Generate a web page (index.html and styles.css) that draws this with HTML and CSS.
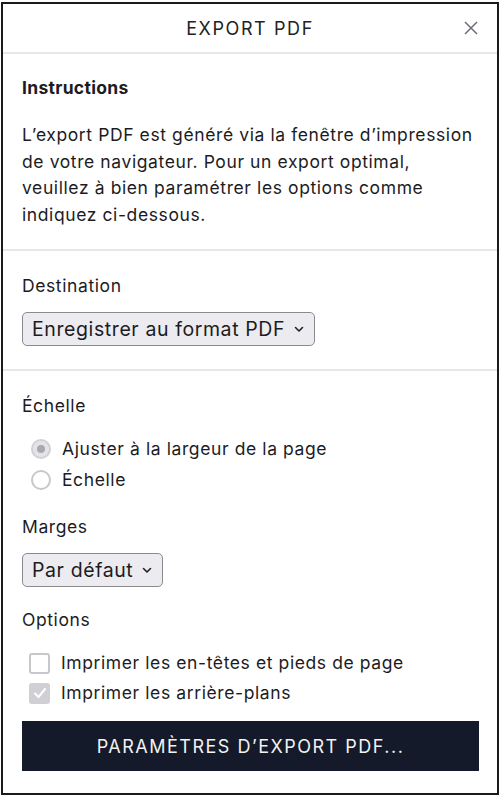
FILE: index.html
```html
<!DOCTYPE html>
<html lang="fr">
<head>
<meta charset="utf-8">
<link rel="stylesheet" href="styles.css">
</head>
<body>
<div class="modal">
  <header class="head">
    <h1 class="title">EXPORT PDF</h1>
    <button class="close" aria-label="Fermer">
      <svg width="14" height="14" viewBox="0 0 14 14"><path d="M1 1L13 13M13 1L1 13" stroke="#6b6e78" stroke-width="1.5" fill="none"/></svg>
    </button>
  </header>
  <section class="sec sec-intro">
    <h2 class="strong">Instructions</h2>
    <p class="para">L’export PDF est généré via la fenêtre d’impression de votre navigateur. Pour un export optimal, veuillez à bien paramétrer les options comme indiquez ci-dessous.</p>
  </section>
  <section class="sec sec-dest">
    <div class="label">Destination</div>
    <div class="select">Enregistrer au format PDF <span class="chev"><svg width="10" height="7" viewBox="0 0 10 7"><path d="M1.5 1.5L5 5L8.5 1.5" stroke="#222" stroke-width="1.6" fill="none" stroke-linecap="round" stroke-linejoin="round"/></svg></span></div>
  </section>
  <section class="sec sec-opts">
    <div class="label">Échelle</div>
    <div class="choices">
      <div class="choice"><span class="radio on"></span>Ajuster à la largeur de la page</div>
      <div class="choice"><span class="radio"></span>Échelle</div>
    </div>
    <div class="label label-m">Marges</div>
    <div class="select">Par défaut <span class="chev"><svg width="10" height="7" viewBox="0 0 10 7"><path d="M1.5 1.5L5 5L8.5 1.5" stroke="#222" stroke-width="1.6" fill="none" stroke-linecap="round" stroke-linejoin="round"/></svg></span></div>
    <div class="label label-o">Options</div>
    <div class="choices choices-c">
      <div class="choice"><span class="check"></span>Imprimer les en-têtes et pieds de page</div>
      <div class="choice"><span class="check on"><svg width="14" height="12" viewBox="0 0 14 12"><path d="M2 6.5L5.5 10L12 2" stroke="#fff" stroke-width="2" fill="none" stroke-linecap="round" stroke-linejoin="round"/></svg></span>Imprimer les arrière-plans</div>
    </div>
    <button class="btn">PARAMÈTRES D’EXPORT PDF...</button>
  </section>
</div>
</body>
</html>
```
FILE: styles.css
```css
* { box-sizing: border-box; }
html, body { margin: 0; padding: 0; background: #fff; }
body {
  font-family: Inter, "Noto Sans", sans-serif;
  color: #1c1c1f;
  width: 500px;
  height: 796px;
  padding: 2px 1px 1px 1px;
  letter-spacing: 0.6px;
}
.modal {
  border: 2px solid #1a1a1a;
  height: 793px;
  background: #fff;
  display: flex;
  flex-direction: column;
}
.head {
  height: 50px;
  border-bottom: 2px solid #e6e6eb;
  display: flex;
  align-items: center;
  justify-content: center;
  position: relative;
}
.title {
  margin: 0;
  font-weight: 400;
  font-size: 18px;
  letter-spacing: 1.6px;
  color: #222;
}
.close {
  position: absolute;
  right: 19px;
  top: 17px;
  border: 0;
  background: none;
  padding: 0;
  width: 14px;
  height: 14px;
  display: flex;
}
.sec {
  padding: 0 19px;
}
.sec-intro {
  padding-top: 22px;
  padding-bottom: 21px;
  border-bottom: 2px solid #e6e6eb;
}
.strong {
  margin: 0;
  font-size: 17.5px;
  font-weight: 700;
  line-height: 24px;
  letter-spacing: 0.3px;
}
.para {
  margin: 22px 0 0;
  max-width: 456px;
  font-size: 17.5px;
  line-height: 26.5px;
}
.sec-dest {
  padding-top: 23px;
  padding-bottom: 23px;
  border-bottom: 2px solid #e6e6eb;
}
.label {
  font-size: 17.5px;
  line-height: 24px;
}
.select {
  margin-top: 14px;
  display: inline-flex;
  align-items: center;
  height: 34px;
  padding: 0 10px 0 9px;
  border: 1px solid #8a8a90;
  border-radius: 5px;
  background: #ebebf0;
  font-size: 19.5px;
  color: #1c1c1f;
}
.chev { margin-left: 9px; display: flex; }
.sec-opts {
  padding-top: 23px;
  display: flex;
  flex-direction: column;
  align-items: flex-start;
}
.choices {
  margin-top: 19px;
  padding-left: 9px;
  display: flex;
  flex-direction: column;
  gap: 7px;
}
.choice {
  display: flex;
  align-items: center;
  font-size: 17.5px;
  line-height: 24px;
  gap: 11px;
}
.radio {
  width: 20px;
  height: 20px;
  border-radius: 50%;
  border: 2px solid #c7c7cc;
  background: #fff;
  display: inline-block;
  position: relative;
}
.radio.on { background: #e4e4e8; border-color: #d0d0d5; }
.radio.on::after {
  content: "";
  position: absolute;
  left: 4px; top: 4px;
  width: 8px; height: 8px;
  border-radius: 50%;
  background: #a8a8ae;
}
.label-m { margin-top: 23px; }
.label-o { margin-top: 21px; }
.choices-c { margin-top: 19px; padding-left: 7px; gap: 6px; }
.check {
  width: 21px;
  height: 21px;
  border: 2px solid #c7c7cc;
  border-radius: 3px;
  background: #fff;
  display: inline-flex;
  align-items: center;
  justify-content: center;
}
.check.on { background: #cfcfd4; border-color: #cfcfd4; }
.btn {
  margin-top: 16px;
  width: 457px;
  height: 50px;
  border: 0;
  background: #141a29;
  color: #f2f2f2;
  font-family: inherit;
  font-size: 18px;
  letter-spacing: 1.5px;
}
```
